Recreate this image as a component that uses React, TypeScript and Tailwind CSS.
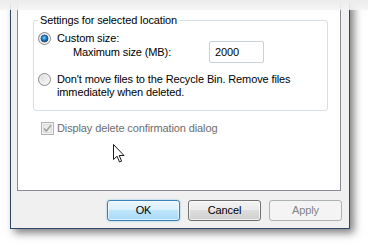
import React from "react";

function Radio({ checked }: { checked?: boolean }) {
  return (
    <svg width="13" height="13" viewBox="0 0 13 13" className="shrink-0">
      <defs>
        <linearGradient id={checked ? "rgA" : "rgB"} x1="0" y1="0" x2="1" y2="1">
          <stop offset="0" stopColor="#d4d4d4" />
          <stop offset="1" stopColor="#ffffff" />
        </linearGradient>
        <radialGradient id={checked ? "dotA" : "dotB"} cx="0.45" cy="0.4" r="0.6">
          <stop offset="0" stopColor="#8fd3ff" />
          <stop offset="0.5" stopColor="#1f86d0" />
          <stop offset="1" stopColor="#0b3f78" />
        </radialGradient>
      </defs>
      <circle cx="6.5" cy="6.5" r="6" fill={checked ? "url(#rgA)" : "url(#rgB)"} stroke="#8a8a8a" strokeWidth="1" />
      <circle cx="6.5" cy="6.5" r="4.5" fill="none" stroke="#f4f4f4" strokeWidth="1" />
      {checked && <circle cx="6.5" cy="6.5" r="3.5" fill="url(#dotA)" stroke="#1b4a78" strokeWidth="0.8" />}
    </svg>
  );
}

function Checkbox() {
  return (
    <svg width="13" height="13" viewBox="0 0 13 13" className="shrink-0">
      <rect x="0.5" y="0.5" width="12" height="12" fill="#f4f4f4" stroke="#b1b1b1" />
      <rect x="2.5" y="2.5" width="8" height="8" fill="#ececec" stroke="#dcdcdc" />
      <path d="M3 6.5 L5.3 9 L10 3.2" fill="none" stroke="#a2a2a2" strokeWidth="1.6" />
    </svg>
  );
}

function Cursor() {
  return (
    <svg width="13" height="20" viewBox="0 0 13 20">
      <path
        d="M0.5 0.5 L0.5 15.5 L4 12.2 L6.5 18 L8.6 17.1 L6.2 11.5 L11 11.5 Z"
        fill="#ffffff"
        stroke="#1a1a1a"
        strokeWidth="1"
        strokeLinejoin="miter"
      />
    </svg>
  );
}

export default function App() {
  return (
    <div className="relative w-[368px] h-[247px] bg-white overflow-hidden font-['Liberation_Sans',Arial,sans-serif] text-[11px] tracking-[-0.12px] text-black">
      <div className="pl-[10px]">
        <div className="w-[340px] h-[229px] bg-[#f0f0f0] border-x border-b border-[#2c4866] shadow-[4px_4px_8px_rgba(0,0,0,0.5)] flex flex-col">
          <div className="ml-[6px] w-[324px] h-[191px] bg-white border-x border-b border-[#898c95] pt-[14px]">
            <fieldset className="ml-[15px] w-[295px] border border-[#d5dfe5] rounded-[3px] pb-[11px]">
              <legend className="ml-[4px] px-[2px] h-[13px] leading-[13px]">Settings for selected location</legend>
              <div className="flex items-start pl-[4px] mt-[5px]">
                <div className="w-[171px] flex flex-col">
                  <div className="flex items-center h-[13px] gap-[6px]">
                    <Radio checked />
                    <span className="leading-[13px]">Custom size:</span>
                  </div>
                  <div className="h-[13px] leading-[13px] mt-[1px] pl-[35px]">Maximum size (MB):</div>
                </div>
                <div className="mt-[9px] w-[55px] h-[22px] border border-[#c8d1da] rounded-[2px] bg-white flex items-center pl-[5px] leading-[13px]">
                  2000
                </div>
              </div>
              <div className="flex items-start pl-[4px] mt-[10px] gap-[6px]">
                <Radio />
                <div className="leading-[13px]">
                  Don't move files to the Recycle Bin. Remove files
                  <br />
                  immediately when deleted.
                </div>
              </div>
            </fieldset>
            <div className="ml-[23px] mt-[11px] flex items-center h-[13px] gap-[3px] text-[#6d6d6d]">
              <Checkbox />
              <span className="leading-[13px]">Display delete confirmation dialog</span>
            </div>
          </div>
          <div className="mt-[9px] flex justify-end gap-[8px] pr-[7px]">
            <button className="w-[73px] h-[21px] rounded-[3px] border border-[#3c7fb1] bg-[linear-gradient(to_bottom,#eaf6fd_0%,#d9f0fc_50%,#bee6fd_50%,#a7d9f5_100%)] shadow-[inset_0_0_0_1px_rgba(255,255,255,0.6),0_0_2px_#6fc0f0] leading-[19px] text-center">
              OK
            </button>
            <button className="w-[73px] h-[21px] rounded-[3px] border border-[#707070] bg-[linear-gradient(to_bottom,#f2f2f2_0%,#ebebeb_50%,#dddddd_50%,#cfcfcf_100%)] shadow-[inset_0_0_0_1px_rgba(255,255,255,0.7)] leading-[19px] text-center">
              Cancel
            </button>
            <button className="w-[73px] h-[21px] rounded-[3px] border border-[#adb2b5] bg-[#f4f4f4] text-[#838383] leading-[19px] text-center">
              Apply
            </button>
          </div>
        </div>
      </div>
      <div className="absolute left-0 top-0 w-[368px] h-[10px] bg-[linear-gradient(to_bottom,rgba(236,236,236,1),rgba(244,244,244,0.85))]" />
      <div className="absolute left-[113px] top-[144px]">
        <Cursor />
      </div>
    </div>
  );
}
